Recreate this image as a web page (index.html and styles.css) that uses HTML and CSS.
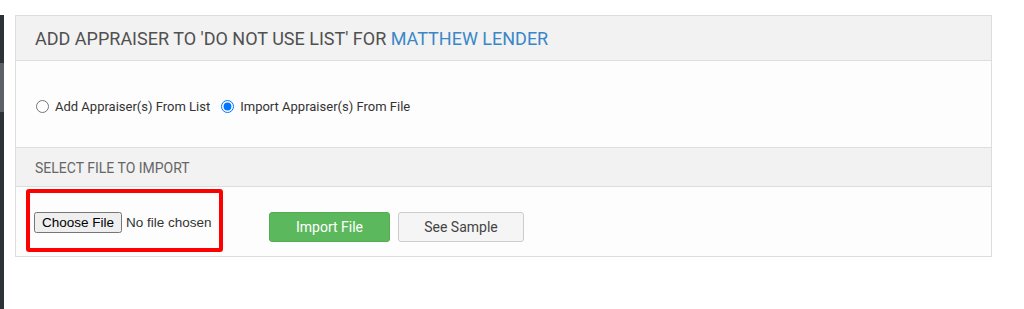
FILE: index.html
```html
<!DOCTYPE html>
<html lang="en">
<head>
    <meta charset="UTF-8">
    <title>Do Not Use List</title>
    <link rel="stylesheet" href="styles.css">
</head>
<body>
    <div class="page">
        <div class="sidebar">
            <div class="sidebar-active"></div>
        </div>
        <div class="panel">
            <div class="panel-heading">
                ADD APPRAISER TO 'DO NOT USE LIST' FOR <span class="lender">MATTHEW LENDER</span>
            </div>
            <div class="panel-body options">
                <label class="option"><input type="radio" name="mode"> Add Appraiser(s) From List</label>
                <label class="option"><input type="radio" name="mode" checked> Import Appraiser(s) From File</label>
            </div>
            <div class="sub-heading">SELECT FILE TO IMPORT</div>
            <div class="panel-body import-row">
                <div class="file-box">
                    <input type="file" id="importFile">
                </div>
                <button class="btn btn-green">Import File</button>
                <button class="btn btn-default">See Sample</button>
            </div>
        </div>
    </div>
</body>
</html>
```

FILE: styles.css
```css
body {
    margin: 0;
    padding: 0;
    background-color: white;
    font-family: Roboto, "Liberation Sans", Arial, sans-serif;
    color: #333;
}
.page {
    display: flex;
    height: 309px;
}
.sidebar {
    width: 4px;
    margin-top: 15px;
    background-color: #2c3238;
}
.sidebar-active {
    margin-top: 48px;
    height: 49px;
    background-color: #5d6166;
}
.panel {
    width: 975px;
    margin: 15px 0 0 11px;
    align-self: flex-start;
    border: 1px solid #dddddd;
    background-color: #fdfdfd;
}
.panel-heading {
    height: 44px;
    line-height: 45px;
    padding-left: 19px;
    font-size: 18px;
    color: #505050;
    background-color: #f2f2f2;
    border-bottom: 1px solid #dddddd;
}
.lender {
    color: #3a87c8;
}
.options {
    height: 86px;
    display: flex;
    align-items: center;
    padding-left: 19px;
    padding-top: 4px;
    box-sizing: border-box;
    gap: 10px;
    font-size: 13px;
}
.option {
    display: flex;
    align-items: center;
}
.option input {
    margin: 0 6px 0 1px;
    width: 13px;
    height: 13px;
}
.sub-heading {
    height: 38px;
    line-height: 40px;
    padding-left: 19px;
    font-size: 14px;
    color: #666;
    background-color: #f2f2f2;
    border-top: 1px solid #dddddd;
    border-bottom: 1px solid #dddddd;
}
.import-row {
    height: 69px;
    display: flex;
    align-items: center;
    padding-left: 10px;
}
.file-box {
    width: 185px;
    height: 55px;
    border: 4px solid #ff0000;
    border-radius: 3px;
    display: flex;
    align-items: center;
    padding-left: 4px;
    margin-top: -3px;
}
.file-box input {
    font-family: "Liberation Sans", Arial, sans-serif;
    font-size: 13.5px;
    margin-top: 4px;
}
.btn {
    height: 30px;
    font-family: Roboto, Arial, sans-serif;
    font-size: 14px;
    border-radius: 3px;
    cursor: pointer;
    margin-top: 10px;
}
.btn-green {
    width: 121px;
    margin-left: 46px;
    background-color: #5cb85c;
    border: 1px solid #53ad53;
    color: white;
}
.btn-default {
    width: 126px;
    margin-left: 8px;
    background-color: #f5f5f5;
    border: 1px solid #cccccc;
    color: #444;
}
```
